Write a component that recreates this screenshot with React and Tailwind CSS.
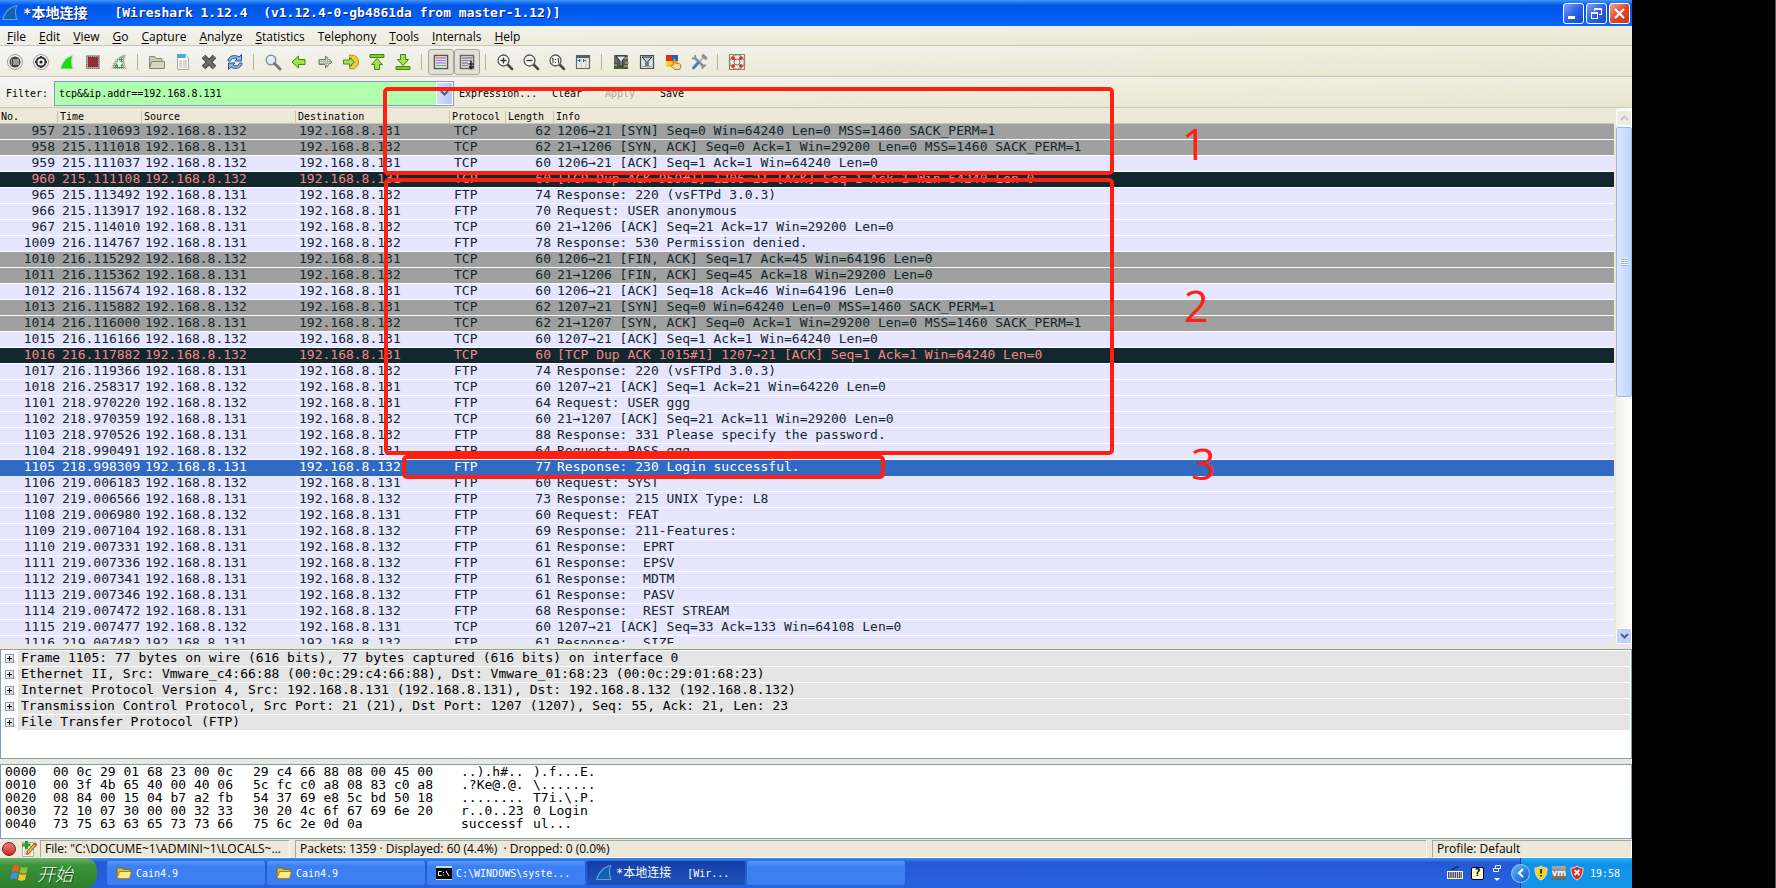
/* App.jsx — Packet capture window on the desktop */
import { useState } from 'react';

const MENUS = [
  ['', 'F', 'ile'], ['', 'E', 'dit'], ['', 'V', 'iew'], ['', 'G', 'o'], ['', 'C', 'apture'], ['', 'A', 'nalyze'],
  ['', 'S', 'tatistics'], ['Telephon', 'y', ''], ['', 'T', 'ools'], ['', 'I', 'nternals'], ['', 'H', 'elp'],
];

const A = '192.168.8.131';
const B = '192.168.8.132';

// no, time, source, protocol, length, info, tone
const PACKETS = [
  [957, '215.110693', B, 'TCP', 62, '1206→21 [SYN] Seq=0 Win=64240 Len=0 MSS=1460 SACK_PERM=1', 'gray'],
  [958, '215.111018', A, 'TCP', 62, '21→1206 [SYN, ACK] Seq=0 Ack=1 Win=29200 Len=0 MSS=1460 SACK_PERM=1', 'gray'],
  [959, '215.111037', B, 'TCP', 60, '1206→21 [ACK] Seq=1 Ack=1 Win=64240 Len=0'],
  [960, '215.111108', B, 'TCP', 60, '[TCP Dup ACK 959#1] 1206→21 [ACK] Seq=1 Ack=1 Win=64240 Len=0', 'bad'],
  [965, '215.113492', A, 'FTP', 74, 'Response: 220 (vsFTPd 3.0.3)'],
  [966, '215.113917', B, 'FTP', 70, 'Request: USER anonymous'],
  [967, '215.114010', A, 'TCP', 60, '21→1206 [ACK] Seq=21 Ack=17 Win=29200 Len=0'],
  [1009, '216.114767', A, 'FTP', 78, 'Response: 530 Permission denied.'],
  [1010, '216.115292', B, 'TCP', 60, '1206→21 [FIN, ACK] Seq=17 Ack=45 Win=64196 Len=0', 'gray'],
  [1011, '216.115362', A, 'TCP', 60, '21→1206 [FIN, ACK] Seq=45 Ack=18 Win=29200 Len=0', 'gray'],
  [1012, '216.115674', B, 'TCP', 60, '1206→21 [ACK] Seq=18 Ack=46 Win=64196 Len=0'],
  [1013, '216.115882', B, 'TCP', 62, '1207→21 [SYN] Seq=0 Win=64240 Len=0 MSS=1460 SACK_PERM=1', 'gray'],
  [1014, '216.116000', A, 'TCP', 62, '21→1207 [SYN, ACK] Seq=0 Ack=1 Win=29200 Len=0 MSS=1460 SACK_PERM=1', 'gray'],
  [1015, '216.116166', B, 'TCP', 60, '1207→21 [ACK] Seq=1 Ack=1 Win=64240 Len=0'],
  [1016, '216.117882', B, 'TCP', 60, '[TCP Dup ACK 1015#1] 1207→21 [ACK] Seq=1 Ack=1 Win=64240 Len=0', 'bad'],
  [1017, '216.119366', A, 'FTP', 74, 'Response: 220 (vsFTPd 3.0.3)'],
  [1018, '216.258317', B, 'TCP', 60, '1207→21 [ACK] Seq=1 Ack=21 Win=64220 Len=0'],
  [1101, '218.970220', B, 'FTP', 64, 'Request: USER ggg'],
  [1102, '218.970359', A, 'TCP', 60, '21→1207 [ACK] Seq=21 Ack=11 Win=29200 Len=0'],
  [1103, '218.970526', A, 'FTP', 88, 'Response: 331 Please specify the password.'],
  [1104, '218.990491', B, 'FTP', 64, 'Request: PASS ggg'],
  [1105, '218.998309', A, 'FTP', 77, 'Response: 230 Login successful.'],
  [1106, '219.006183', B, 'FTP', 60, 'Request: SYST'],
  [1107, '219.006566', A, 'FTP', 73, 'Response: 215 UNIX Type: L8'],
  [1108, '219.006980', B, 'FTP', 60, 'Request: FEAT'],
  [1109, '219.007104', A, 'FTP', 69, 'Response: 211-Features:'],
  [1110, '219.007331', A, 'FTP', 61, 'Response:  EPRT'],
  [1111, '219.007336', A, 'FTP', 61, 'Response:  EPSV'],
  [1112, '219.007341', A, 'FTP', 61, 'Response:  MDTM'],
  [1113, '219.007346', A, 'FTP', 61, 'Response:  PASV'],
  [1114, '219.007472', A, 'FTP', 68, 'Response:  REST STREAM'],
  [1115, '219.007477', B, 'TCP', 60, '1207→21 [ACK] Seq=33 Ack=133 Win=64108 Len=0'],
  [1116, '219.007482', A, 'FTP', 61, 'Response:  SIZE'],
];

const TONES = {
  gray: 'bg-[#a0a0a0] text-[#12272e]',
  bad: 'bg-[#12272e] text-[#f78787]',
  normal: 'bg-[#e7e6ff] text-[#12272e]',
  selected: 'bg-[#316ac5] text-white',
};

const DETAILS = [
  'Frame 1105: 77 bytes on wire (616 bits), 77 bytes captured (616 bits) on interface 0',
  'Ethernet II, Src: Vmware_c4:66:88 (00:0c:29:c4:66:88), Dst: Vmware_01:68:23 (00:0c:29:01:68:23)',
  'Internet Protocol Version 4, Src: 192.168.8.131 (192.168.8.131), Dst: 192.168.8.132 (192.168.8.132)',
  'Transmission Control Protocol, Src Port: 21 (21), Dst Port: 1207 (1207), Seq: 55, Ack: 21, Len: 23',
  'File Transfer Protocol (FTP)',
];

const HEX = [
  ['0000', '00 0c 29 01 68 23 00 0c', '29 c4 66 88 08 00 45 00', '..).h#..', ').f...E.'],
  ['0010', '00 3f 4b 65 40 00 40 06', '5c fc c0 a8 08 83 c0 a8', '.?Ke@.@.', '\\.......'],
  ['0020', '08 84 00 15 04 b7 a2 fb', '54 37 69 e8 5c bd 50 18', '........', 'T7i.\\.P.'],
  ['0030', '72 10 07 30 00 00 32 33', '30 20 4c 6f 67 69 6e 20', 'r..0..23', '0 Login'],
  ['0040', '73 75 63 63 65 73 73 66', '75 6c 2e 0d 0a', 'successf', 'ul...'],
];

const SMALL = 'font-["DejaVu_Sans_Mono","Noto_Sans_CJK_SC",monospace] text-[10px]';
const MONO = 'font-["DejaVu_Sans_Mono",monospace] text-[13px]';
const SANS = 'font-["Open_Sans","Noto_Sans",sans-serif] text-[12px]';
const BAR = 'bg-linear-to-br from-[#f4f5f6] via-[#efeddf] to-[#e9e5cf] border-b border-[#c9c6b4]';

export default function App() {
  const [selected, setSelected] = useState(1105);
  const [filter, setFilter] = useState('tcp&&ip.addr==192.168.8.131');

  return (
    <div className="flex h-screen overflow-hidden bg-black">
      <main className="relative flex min-w-0 flex-1 flex-col bg-[#ece9d8]">
        <TitleBar />

        {/* Menu */}
        <nav className={`flex h-5 shrink-0 items-center gap-[13px] pt-0.5 pl-[7px] text-black ${BAR} ${SANS}`}>
          {MENUS.map(([pre, key, post]) => (
            <button key={pre + key + post} className="leading-4">
              {pre}<span className="underline underline-offset-2">{key}</span>{post}
            </button>
          ))}
        </nav>

        <Toolbar />

        {/* Display filter */}
        <div className={`flex h-[31px] shrink-0 items-center pt-0.5 pl-1.5 ${BAR} ${SMALL}`}>
          <label htmlFor="filter" className="w-12 shrink-0">Filter:</label>
          <div className="flex h-[25px] w-[400px] shrink-0 border border-[#7f9db9] bg-[#afffaf]">
            <input
              id="filter"
              value={filter}
              onChange={(e) => setFilter(e.target.value)}
              className="min-w-0 flex-1 pl-1 outline-none"
            />
            <button aria-label="Filter history" className="flex w-[17px] items-center justify-center border border-white bg-linear-to-r from-[#d5e1fd] to-[#b4c8f5]">
              <Chevron color="#4d6185" />
            </button>
          </div>
          <div className="flex pl-[5px]">
            <button className="w-[93px] text-left">Expression...</button>
            <button className="w-[53px] text-left">Clear</button>
            <button disabled className="w-[55px] text-left text-[#aca899]">Apply</button>
            <button>Save</button>
          </div>
        </div>

        {/* Packet list */}
        <section className="flex min-h-0 flex-1">
          <div className="min-w-0 flex-1 overflow-hidden">
            <table className="w-full table-fixed border-separate border-spacing-0">
              <colgroup>
                <col className="w-[57px]" />
                <col className="w-[84px]" />
                <col className="w-[154px]" />
                <col className="w-[154px]" />
                <col className="w-[56px]" />
                <col className="w-[48px]" />
                <col />
              </colgroup>
              <thead>
                <tr className={SMALL}>
                  {['No.', 'Time', 'Source', 'Destination', 'Protocol', 'Length', 'Info'].map((h, i) => (
                    <th key={h} className="h-4 border-b border-[#c9c5b4] p-0 pt-[3px] text-left align-top font-normal">
                      <div className={`h-3 leading-3 ${i ? 'border-l border-[#c6c3b2] pl-0.5' : 'pl-px'}`}>{h}</div>
                    </th>
                  ))}
                </tr>
              </thead>
              <tbody>
                {PACKETS.map(([no, time, src, proto, len, info, tone]) => {
                  const isSelected = no === selected;
                  const cell = `h-4 border-b p-0 align-top leading-[13px] ${isSelected ? 'border-[#316ac5]' : 'border-white'}`;
                  return (
                    <tr
                      key={no}
                      onClick={() => setSelected(no)}
                      className={`whitespace-pre ${MONO} ${TONES[isSelected ? 'selected' : tone ?? 'normal']}`}
                    >
                      <td className={`${cell} pr-0.5 text-right`}>{no}</td>
                      <td className={`${cell} pl-[5px]`}>{time}</td>
                      <td className={`${cell} pl-1`}>{src}</td>
                      <td className={`${cell} pl-1`}>{src === A ? B : A}</td>
                      <td className={`${cell} pl-[5px]`}>{proto}</td>
                      <td className={`${cell} pr-0.5 text-right`}>{len}</td>
                      <td className={`${cell} pl-1`}>{info}</td>
                    </tr>
                  );
                })}
              </tbody>
            </table>
          </div>
          <ScrollBar />
        </section>

        {/* Packet details */}
        <section className={`mt-[5px] h-[110px] shrink-0 border border-[#7f9db9] bg-white p-px ${MONO}`}>
          {DETAILS.map((line) => (
            <div key={line} className="flex h-4 items-center gap-1 border-b border-white pl-[3px]">
              <button aria-label="Expand" className="flex size-[9px] shrink-0 items-center justify-center border border-[#7b9ebd] bg-linear-to-br from-white to-[#d8d2c5]">
                <svg viewBox="0 0 5 5" className="size-[5px]" shapeRendering="crispEdges"><path d="M0 2h5v1H0zM2 0h1v5H2z" /></svg>
              </button>
              <div className="h-[15px] flex-1 bg-[#e4e4e4] pl-[3px] leading-[14px] whitespace-pre">{line}</div>
            </div>
          ))}
        </section>

        {/* Packet bytes */}
        <section className={`mt-[5px] h-[75px] shrink-0 border border-[#7f9db9] bg-white pl-1 ${MONO}`}>
          {HEX.map(([offset, left, right, ascii, ascii2]) => (
            <div key={offset} className="grid h-[13px] grid-cols-[48px_200px_208px_72px_1fr] leading-[13px] whitespace-pre">
              <span>{offset}</span><span>{left}</span><span>{right}</span><span>{ascii}</span><span>{ascii2}</span>
            </div>
          ))}
        </section>

        <StatusBar />
        <TaskBar />
        <Annotations />
      </main>
      <div className="w-36 shrink-0 border-r border-[#5a5a5a] bg-black" />
    </div>
  );
}

function TitleBar() {
  return (
    <header className="flex h-[26px] shrink-0 items-center bg-linear-to-b from-[#3d95ff] via-[#0055e5] via-20% to-[#0566fd] pr-0.5 pl-0.5 text-white">
      <Fin className="size-4" />
      <h1 className='ml-[5px] flex flex-1 items-center gap-[27px] font-["DejaVu_Sans_Mono","Noto_Sans_CJK_SC",monospace] text-[13px] leading-5 font-bold whitespace-pre [text-shadow:1px_1px_#0a1883]'>
        <span className="text-[14px]">*本地连接</span>
        <span>[Wireshark 1.12.4  (v1.12.4-0-gb4861da from master-1.12)]</span>
      </h1>
      <div className="flex gap-0.5">
        <button aria-label="Minimize" className="flex size-[21px] items-center justify-center rounded-[3px] border border-white bg-linear-to-br from-[#7d9df5] via-[#2d62e8] to-[#1149c9]">
          <svg viewBox="0 0 15 15" className="size-[15px]"><path d="M2 10h7v3H2z" fill="#fff" /></svg>
        </button>
        <button aria-label="Restore" className="flex size-[21px] items-center justify-center rounded-[3px] border border-white bg-linear-to-br from-[#7d9df5] via-[#2d62e8] to-[#1149c9]">
          <svg viewBox="0 0 15 15" className="size-[15px]" fill="none" stroke="#fff" shapeRendering="crispEdges">
            <path d="M5.500 5V2.500h7v6H10M5 2.500h8M2.500 6.500h6v6h-6zM2 6.500h7" />
            <path d="M5 3.500h8M2 7.500h7" />
          </svg>
        </button>
        <button aria-label="Close" className="flex size-[21px] items-center justify-center rounded-[3px] border border-white bg-linear-to-br from-[#f0a08a] via-[#e0492a] to-[#c23a12]">
          <svg viewBox="0 0 15 15" className="size-[15px]"><path d="M3 3l9 9M12 3l-9 9" stroke="#fff" strokeWidth="2.200" /></svg>
        </button>
      </div>
    </header>
  );
}

function Toolbar() {
  return (
    <div className={`flex h-[31px] shrink-0 items-center pt-0.5 pl-0.5 ${BAR}`}>
      <Tool label="Interfaces">
        <Ring /><circle cx="9" cy="9" r="5.500" fill="#444" />
        <path d="M5 7h1M7 7h6M5 9h1M7 9h6M5 11h1M7 11h6" stroke="#eee" strokeWidth="1.200" />
      </Tool>
      <Tool label="Capture options">
        <Ring /><circle cx="9" cy="9" r="4.500" fill="none" stroke="#333" strokeWidth="2" />
        <circle cx="9" cy="9" r="1.600" fill="#222" />
        <path d="M9 3v2M9 13v2M3 9h2M13 9h2" stroke="#333" strokeWidth="2" />
      </Tool>
      <Tool label="Start capture">
        <path d="M1.500 16C3 9 7 3 16 1.500c-2 4-2 9 .5 14.500z" fill="#d9ddd9" />
        <path d="M3 15.500C4.500 9.500 8 5 14 3c-1.200 4-1 8.500.5 12.500z" fill="#16dd0c" />
      </Tool>
      <Tool label="Stop capture">
        <path d="M2 2h14v14H2z" fill="#aaa" /><path d="M4 4h10v10H4z" fill="#a32a2e" />
        <path d="M2 3.500h14M2 5.500h14M2 7.500h14M2 9.500h14M2 11.500h14M2 13.500h14M2 15.500h14" stroke="#4b3a3a" strokeWidth="1" strokeDasharray="1 1" opacity=".55" />
      </Tool>
      <Tool label="Restart capture">
        <path d="M1.500 16C3 9 7 3 16 1.500c-2 4-2 9 .5 14.500z" fill="#a3aea3" />
        <path d="M4 15.500C5 10 8 6 13 4c-1.200 4-1 7.500.5 11.500z" fill="#4c8f4c" />
        <path d="M9 7l-3 4h2v3h3v-3h2z" fill="#e8efe8" />
        <path d="M8 5.500h8M6 7.500h10M4 9.500h12M3 11.500h13M2 13.500h14M2 15.500h14" stroke="#fff" strokeDasharray="1 1" opacity=".6" />
      </Tool>
      <Sep />
      <Tool label="Open">
        <path d="M1.500 15.500v-12h5l1.500 2h6v3" fill="#c9ceb4" stroke="#83886c" />
        <path d="M1.500 15.500l2-7h13v7z" fill="#d3d8bf" stroke="#83886c" />
      </Tool>
      <Tool label="Save">
        <path d="M3.500 1.500h8l3 3v12h-11z" fill="#fbfbf8" stroke="#a8a89c" />
        <path d="M3 1h8.500L15 5H3z" fill="#4ea6dc" /><path d="M11.500 1v4H15z" fill="#d6ecf8" />
        <path d="M5 8h3M9 8h4M5 10h3M9 10h4M5 12h3M9 12h4M5 14h3M9 14h4" stroke="#b5b5aa" />
      </Tool>
      <Tool label="Close file">
        <path d="M3.500 3.500l11 11M14.500 3.500l-11 11" stroke="#3d3f3e" strokeWidth="5" />
        <path d="M3.500 3.500l11 11M14.500 3.500l-11 11" stroke="#6b6e6d" strokeWidth="3" />
      </Tool>
      <Tool label="Reload">
        <path d="M2 8C2 3 9 1 13 4l2.500-2.500V8H9l2-2C8 4.500 5 5.500 4.500 8z" fill="#8db3e8" stroke="#2d579b" />
        <path d="M16 10c0 5-7 7-11 4l-2.500 2.500V10H9l-2 2c3 1.500 6 .5 6.500-2z" fill="#8db3e8" stroke="#2d579b" />
      </Tool>
      <Sep />
      <Tool label="Find">
        <circle cx="7" cy="7" r="4.800" fill="#dcebf8" stroke="#8b8f91" strokeWidth="1.500" />
        <path d="M10.500 10.500l5.500 5.500" stroke="#777" strokeWidth="3" strokeLinecap="round" />
        <path d="M4.500 6.500C5 5 6.500 4 8 4.500" stroke="#fff" fill="none" />
      </Tool>
      <Tool label="Back">
        <path d="M2 9l6.500-6v3.500H15v5H8.500V15z" fill="#a6e04b" stroke="#3c8a12" strokeLinejoin="round" />
      </Tool>
      <Tool label="Forward">
        <path d="M16 9l-6.500-6v3.500H3v5h6.500V15z" fill="#a6b597" stroke="#6f7d66" strokeLinejoin="round" />
        <path d="M4 7.500h10M4 9.500h10M9 11.500h5M10 5.500h3" stroke="#e9eee4" strokeDasharray="1 1" />
      </Tool>
      <Tool label="Go to packet">
        <path d="M7 2.500c5-1.500 9.500 1.500 9.500 6.500s-4.500 8-9.500 6.500c2-1.500 3-3.500 3-6.500s-1-5-3-6.500z" fill="#f5c93c" stroke="#b58a12" />
        <path d="M12.500 9L7.500 4.500V7H1.500v4h6v2.500z" fill="#a6e04b" stroke="#3c8a12" strokeLinejoin="round" />
      </Tool>
      <Tool label="First packet">
        <path d="M2 1.500h14v3H2z" fill="#7ed321" stroke="#3c8a12" />
        <path d="M9 5.500l5.500 6h-3v5h-5v-5h-3z" fill="#a6e04b" stroke="#3c8a12" strokeLinejoin="round" />
      </Tool>
      <Tool label="Last packet">
        <path d="M2 13.500h14v3H2z" fill="#7ed321" stroke="#3c8a12" />
        <path d="M9 12.500l5.500-6h-3v-5h-5v5h-3z" fill="#a6e04b" stroke="#3c8a12" strokeLinejoin="round" />
      </Tool>
      <Sep />
      <Tool label="Colorize" pressed>
        <path d="M2.500 2.500h13v13h-13z" fill="#fff" stroke="#555" strokeWidth="1.500" />
        <path d="M4 5h10" stroke="#e36a6a" strokeWidth="1.500" /><path d="M4 7.500h10" stroke="#5b9ae0" strokeWidth="1.500" />
        <path d="M4 10h10" stroke="#c77ae0" strokeWidth="1.500" /><path d="M4 12.500h10" stroke="#62b562" strokeWidth="1.500" />
      </Tool>
      <Tool label="Auto scroll" pressed>
        <path d="M2.500 2.500h13v13h-13z" fill="#e9e9e9" stroke="#666" strokeWidth="1.500" />
        <path d="M4 5h10M4 7.500h10M4 10h6M4 12.500h6" stroke="#888" strokeWidth="1.300" />
        <path d="M13 8v6M10.500 11h5M11 13l2 2.500 2-2.500" stroke="#222" strokeWidth="1.500" fill="none" />
      </Tool>
      <Sep />
      <Tool label="Zoom in"><Lens /><path d="M7.500 4.500v6M4.500 7.500h6" stroke="#333" strokeWidth="1.300" /></Tool>
      <Tool label="Zoom out"><Lens /><path d="M4.500 7.500h6" stroke="#333" strokeWidth="1.300" /></Tool>
      <Tool label="Normal size"><Lens /><path d="M4 6l1-.7v5M9.500 6l1-.7v5M7.500 6v1M7.500 9v1" stroke="#333" fill="none" /></Tool>
      <Tool label="Resize columns">
        <path d="M2.500 2.500h13v13h-13z" fill="#ecece6" stroke="#666" strokeWidth="1.200" />
        <path d="M2 2h14v3H2z" fill="#5a5e60" /><path d="M7 5v10M12 5v10" stroke="#c4c4bc" />
        <path d="M3.500 7.500h3M5.500 6v3M9 7.500h3M9.500 6v3" stroke="#2d67b5" />
      </Tool>
      <Sep />
      <Tool label="Capture filters">
        <path d="M2 2h14v14H2z" fill="#62665c" /><path d="M2 10h14v6H2z" fill="#4b5a3d" />
        <path d="M4 3h10l-4 5v5H8V8z" fill="#dfe9f2" stroke="#222" />
        <path d="M2 12h3M12 13h4M13 10h4M12 5h4" stroke="#9aa58a" strokeWidth="1.500" />
      </Tool>
      <Tool label="Display filters">
        <path d="M2.500 2.500h13v13h-13z" fill="#dfe3e6" stroke="#4a4f55" strokeWidth="1.200" />
        <path d="M4 4h10l-4 4.500v5H8v-5z" fill="#b9cfe3" stroke="#222" />
        <path d="M4 13.500h10" stroke="#999" />
      </Tool>
      <Tool label="Coloring rules">
        <path d="M2 2h6v6H2z" fill="#e8291c" /><path d="M8 2h6v6H8z" fill="#2c56c8" /><path d="M2 8h6v6H2z" fill="#f7d21d" /><path d="M8 8h6v6H8z" fill="#e9b41d" />
        <path d="M9.500 12V6.500c0-1 1.500-1 1.500 0V10l5 1c1 .3 1 1.500.5 3l-.8 2.500h-5L7 13c-.5-1 .8-1.500 1.500-.8z" fill="#fbd9a5" stroke="#c07a1c" />
      </Tool>
      <Tool label="Preferences">
        <path d="M5 5l8.500 8.500" stroke="#8a9096" strokeWidth="2.500" strokeLinecap="round" />
        <path d="M14 4l-5 5" stroke="#9aa0a6" strokeWidth="1.500" /><path d="M8 10L3.500 15" stroke="#3f7fc4" strokeWidth="3" strokeLinecap="round" />
        <path d="M2 5c2 1.500 3.500 0 3-3M12.500 16c-.5-3 1-4.500 3.500-3.500M12.500 3l3 3 1-1-3-3z" stroke="#8a9096" strokeWidth="1.800" fill="none" />
      </Tool>
      <Sep />
      <Tool label="Help">
        <path d="M1.500 1.500h15v15h-15z" fill="none" stroke="#8d8678" strokeWidth="1.200" />
        <circle cx="9" cy="9" r="5.300" fill="none" stroke="#eee" strokeWidth="4" />
        <circle cx="9" cy="9" r="7.300" fill="none" stroke="#777" /><circle cx="9" cy="9" r="3" fill="none" stroke="#777" />
        <g fill="#ee2f22"><circle cx="5.200" cy="5.200" r="1.900" /><circle cx="12.800" cy="5.200" r="1.900" /><circle cx="5.200" cy="12.800" r="1.900" /><circle cx="12.800" cy="12.800" r="1.900" /></g>
      </Tool>
    </div>
  );
}

function Tool({ label, pressed, children }) {
  return (
    <button
      aria-label={label}
      className={`flex h-[26px] w-[26px] shrink-0 items-center justify-center ${pressed ? 'rounded-[3px] border border-[#a9a699] bg-[#e3e1d6]' : ''}`}
    >
      <svg viewBox="0 0 18 18" className="size-[18px] shrink-0">{children}</svg>
    </button>
  );
}

function Sep() {
  return <div className="h-4 w-3 shrink-0 pl-[5px]"><div className="h-4 w-px bg-[#b9b191]" /></div>;
}

function Ring() {
  return <circle cx="9" cy="9" r="7.500" fill="#f3f3f3" stroke="#9a9a9a" />;
}

function Lens() {
  return (
    <>
      <path d="M11.500 11.500L16 16" stroke="#444" strokeWidth="2.500" strokeLinecap="round" />
      <circle cx="7.500" cy="7.500" r="5.500" fill="#f6f6f3" stroke="#555" strokeWidth="1.300" />
    </>
  );
}

function Fin({ className }) {
  return (
    <svg viewBox="0 0 16 16" className={className}>
      <path d="M0 15C2 7 7 1 15.500 0c-2 5-2 10 .3 15z" fill="#5f9fe0" />
      <path d="M1.500 14C3.500 8 7.500 2.500 14 1.200 12.500 6 12.700 10 14.300 14z" fill="#1161b8" />
    </svg>
  );
}

function Chevron({ color, up }) {
  return (
    <svg viewBox="0 0 9 6" className="h-1.5 w-[9px] shrink-0">
      <path d={up ? 'M1 5l3.500-3.500L8 5' : 'M1 1l3.500 3.500L8 1'} fill="none" stroke={color} strokeWidth="2" />
    </svg>
  );
}

function ScrollBar() {
  return (
    <div className="flex w-[18px] shrink-0 flex-col border-l-2 border-[#ece9d8] bg-linear-to-r from-[#f3f1ec] to-[#fefefb] pt-0.5">
      <button aria-label="Scroll up" className="flex h-4 items-center justify-center rounded-xs border border-white bg-[#ecebe4]"><Chevron up color="#c9c7bf" /></button>
      <div className="mt-px flex h-[270px] items-center justify-center rounded-xs border border-[#98b7f3] bg-linear-to-r from-[#dbe8ff] to-[#bfd5fd]">
        <svg viewBox="0 0 7 8" className="h-2 w-[7px]" shapeRendering="crispEdges"><path d="M0 .5h7M0 2.500h7M0 4.500h7M0 6.500h7" stroke="#fff" /><path d="M0 1.500h7M0 3.500h7M0 5.500h7M0 7.500h7" stroke="#8cb0f8" /></svg>
      </div>
      <button aria-label="Scroll down" className="mt-auto flex h-4 items-center justify-center rounded-xs border border-white bg-[#c1d3fb]"><Chevron color="#4d6185" /></button>
    </div>
  );
}

function StatusBar() {
  const panel = 'h-[18px] border border-t-[#aca899] border-l-[#aca899] border-r-white border-b-white pl-1 leading-4 whitespace-pre';
  return (
    <footer className={`flex h-[19px] shrink-0 items-center text-black ${SANS}`}>
      <button aria-label="Expert info" className="ml-0.5 size-3.5 shrink-0 rounded-full border border-[#6d2020] bg-linear-to-b from-[#ee7b7b] to-[#cc2222]" />
      <button aria-label="Capture comment" className="mr-[3px] ml-[5px] shrink-0">
        <svg viewBox="0 0 16 16" className="size-4">
          <path d="M1.500 1.500h11v14h-11z" fill="#f7f6f1" stroke="#b3ad9d" /><path d="M3 9h4M3 11h3M3 13h7" stroke="#b5b5aa" />
          <path d="M4 0h3v2.500h2.500v3H7V8H4V5.500H1v-3h3z" fill="#2fa31a" />
          <path d="M5.500 13.500l1-3.500 7-8 2 2-7 8z" fill="#f2b23a" stroke="#8a5b16" /><path d="M12.500 3l1.500-1.800 2 1.800-1.500 2z" fill="#d8494a" />
        </svg>
      </button>
      <div className={`${panel} w-[250px] shrink-0`}>File: "C:\DOCUME~1\ADMINI~1\LOCALS~...</div>
      <div className={`${panel} ml-[5px] min-w-0 flex-1`}>Packets: 1359 · Displayed: 60 (4.4%)  · Dropped: 0 (0.0%)</div>
      <div className={`${panel} ml-[5px] w-[200px] shrink-0`}>Profile: Default</div>
    </footer>
  );
}

function TaskBar() {
  const item = 'flex h-6 w-[158px] shrink-0 items-center gap-1 overflow-hidden rounded-xs pl-[9px] whitespace-pre';
  const idle = 'bg-linear-to-b from-[#5a9cff] via-[#3c81f3] via-20% to-[#3a7df0]';
  return (
    <footer className='flex h-[30px] shrink-0 items-center bg-linear-to-b from-[#3f8cf3] via-[#2459d6] via-15% to-[#2663e0] font-["DejaVu_Sans_Mono","Noto_Sans_CJK_SC",monospace] text-[10px] text-white'>
      <button className="mr-2.5 flex h-[30px] w-[97px] shrink-0 items-center gap-[7px] rounded-r-xl bg-linear-to-b from-[#6ab468] via-[#3a9239] via-25% to-[#2f7f2e] pl-2.5">
        <svg viewBox="0 0 20 18" className="h-[18px] w-5">
          <path d="M3 2c2.500-1.500 4.500-1 6.500 0L8.300 8C6 7 4 7 1.800 8z" fill="#ee5a24" /><path d="M10.800 2.700c2.500 1.200 4.500 1 7 0L16.500 8.800c-2.500 1-4.500 1-7 0z" fill="#8cc63f" />
          <path d="M1.500 9.300c2.500-1 4.500-1 6.500 0l-1.200 6c-2.500-1-4.500-1-6.500 0z" fill="#4a8cf0" /><path d="M9.300 10c2.500 1 4.500 1 7 0L15 16c-2.500 1-4.500 1-7 0z" fill="#fbc81e" />
        </svg>
        <span className='font-["Noto_Sans_CJK_SC",sans-serif] text-[18px] leading-none font-light italic [text-shadow:1px_1px_#1d4d1c]'>开始</span>
      </button>
      <div className="flex min-w-0 flex-1 gap-0.5">
        <button className={`${item} ${idle}`}><Folder />Cain4.9</button>
        <button className={`${item} ${idle}`}><Folder />Cain4.9</button>
        <button className={`${item} ${idle}`}>
          <svg viewBox="0 0 16 14" className="h-3.5 w-4"><path d="M0 0h16v14H0z" fill="#cfd6e4" /><path d="M0 2h16v11H0z" fill="#000" /><path d="M5.500 5.500H2.500v4h3M7.500 6v1M7.500 8.500v1M10 5l3 5" stroke="#fff" fill="none" /></svg>
          C:\WINDOWS\syste...
        </button>
        <button className={`${item} bg-linear-to-b from-[#1440a5] to-[#1d52bb]`}>
          <Fin className="size-4" /><span className="text-[12px]">*本地连接</span><span className="pl-3">[Wir...</span>
        </button>
        <button aria-label="Window" className={`${item} ${idle}`} />
      </div>
      <div className="flex items-center gap-2 pr-[18px]">
        <svg viewBox="0 0 16 14" className="h-3.5 w-4"><path d="M5 4c0-3 3 0 3-2s3 0 4-1" stroke="#111" fill="none" /><path d="M0 5h16v8H0z" fill="#fff" /><path d="M1 7h14M1 9h14M1 11h14" stroke="#111" strokeWidth="1.500" strokeDasharray="1.500 .7" /></svg>
        <span className="flex h-[13px] w-[13px] items-center justify-center rounded-xs border border-black bg-[#fffbd0] text-[11px] font-bold text-black">?</span>
        <svg viewBox="0 0 10 18" className="h-[18px] w-2.5"><path d="M3.500 4V1.500h5v3H6M1.500 4.500h5v3h-5z" stroke="#fff" fill="none" /><path d="M2 14h6l-3 3z" fill="#fff" /></svg>
      </div>
      <div className="flex h-[30px] w-28 shrink-0 items-center gap-1 border-l border-[#0d3fa0] bg-linear-to-b from-[#1fb2f5] via-[#1290e8] via-20% to-[#1396ea]">
        <button aria-label="Show hidden icons" className="-ml-2.5 flex size-[19px] shrink-0 items-center justify-center rounded-full border border-[#8fd0f8] bg-linear-to-br from-[#5fb8f5] to-[#0d57c8]">
          <svg viewBox="0 0 8 10" className="h-2.5 w-2"><path d="M6 1L2 5l4 4" stroke="#fff" strokeWidth="2" fill="none" /></svg>
        </button>
        <Shield fill="#f6cf1f"><path d="M7 4v4.500M7 10v1.500" stroke="#222" strokeWidth="1.800" /></Shield>
        <span className='flex size-3.5 items-center justify-center bg-linear-to-b from-[#aaa] to-[#666] font-["Open_Sans",sans-serif] text-[9px] font-bold'>vm</span>
        <Shield fill="#d92b2b"><path d="M4.500 5l5 5M9.500 5l-5 5" stroke="#fff" strokeWidth="1.800" /></Shield>
        <time className="ml-0.5">19:58</time>
      </div>
    </footer>
  );
}

function Folder() {
  return (
    <svg viewBox="0 0 16 14" className="h-3.5 w-4">
      <path d="M1 12V2h5l1.500 1.500H14V6" fill="#e9b93b" stroke="#8b6a12" /><path d="M1 12.500L3.500 5.500h12L13.500 12.500z" fill="#fdea8e" stroke="#a98317" />
    </svg>
  );
}

function Shield({ fill, children }) {
  return (
    <svg viewBox="0 0 14 16" className="h-4 w-3.5 shrink-0">
      <path d="M7 1c2 1.500 4 2 6 2 0 6-1.500 10-6 12C2.500 13 1 9 1 3c2 0 4-.5 6-2z" fill={fill} stroke="#e3e0d0" />
      {children}
    </svg>
  );
}

// Red marks drawn over the window
function Annotations() {
  const mark = 'absolute font-["Open_Sans",sans-serif] text-[43px] leading-none text-[#ff2010]';
  const box = 'absolute rounded-[5px] border-4 border-[#ff2010]';
  return (
    <div className="pointer-events-none absolute inset-0">
      <div className={`${box} top-[87px] left-[383px] h-[88px] w-[731px]`} />
      <div className={`${box} top-[178px] left-[384px] h-[277px] w-[730px]`} />
      <div className={`${box} top-[455px] left-[402px] h-6 w-[483px]`} />
      <span className={`${mark} top-[122px] left-[1182px]`}>1</span>
      <span className={`${mark} top-[284px] left-[1184px]`}>2</span>
      <span className={`${mark} top-[442px] left-[1191px]`}>3</span>
    </div>
  );
}
